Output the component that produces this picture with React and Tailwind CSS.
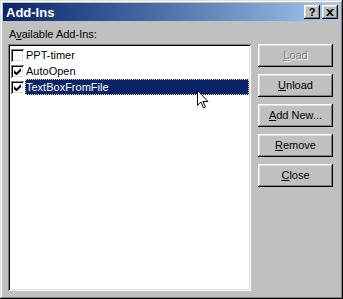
import React from 'react';

const raised =
  'shadow-[inset_-1px_-1px_#000,inset_1px_1px_#fff,inset_-2px_-2px_#808080,inset_2px_2px_#dfdfdf]';
const sunken =
  'shadow-[inset_1px_1px_#808080,inset_-1px_-1px_#fff,inset_2px_2px_#000,inset_-2px_-2px_#dfdfdf]';

const items = [
  { name: 'PPT-timer', checked: false },
  { name: 'AutoOpen', checked: true },
  { name: 'TextBoxFromFile', checked: true, selected: true },
];

const buttons = [
  { label: 'Load', key: 'L', rest: 'oad', disabled: true },
  { label: 'Unload', key: 'U', rest: 'nload' },
  { label: 'Add New...', key: 'A', rest: 'dd New...' },
  { label: 'Remove', key: 'R', rest: 'emove' },
  { label: 'Close', key: 'C', rest: 'lose' },
];

const CheckBox = ({ checked }) => (
  <div className={`w-[13px] h-[13px] bg-white flex items-center justify-center shrink-0 ${sunken}`}>
    {checked && (
      <svg width="7" height="7" viewBox="0 0 7 7">
        <path d="M0 2v3l2 2h1l4-4V0L2.5 4.5z" fill="#000" />
      </svg>
    )}
  </div>
);

export default function App() {
  return (
    <div
      className={`relative w-[343px] h-[299px] bg-[#c0c0c0] p-[3px] flex flex-col text-[11px] text-black shadow-[inset_-1px_-1px_#000,inset_1px_1px_#dfdfdf,inset_-2px_-2px_#808080,inset_2px_2px_#fff]`}
      style={{ fontFamily: '"Liberation Sans", Arial, sans-serif' }}
    >
      {/* title bar */}
      <div className="h-[18px] flex items-center justify-between pl-[3px] pr-[2px] bg-gradient-to-r from-[#0a246a] to-[#a6caf0]">
        <span className="text-white font-bold text-[13px] leading-none">Add-Ins</span>
        <div className="flex gap-[2px]">
          <div className={`w-[16px] h-[14px] bg-[#c0c0c0] flex items-center justify-center font-bold text-[11px] leading-none ${raised}`}>
            ?
          </div>
          <div className={`w-[16px] h-[14px] bg-[#c0c0c0] flex items-center justify-center ${raised}`}>
            <svg width="8" height="7" viewBox="0 0 8 7">
              <path d="M0 0h2l2 2 2-2h2L5 3.5 8 7H6L4 5 2 7H0l3-3.5z" fill="#000" />
            </svg>
          </div>
        </div>
      </div>

      <div className="flex flex-1 pl-[5px]">
        {/* left column */}
        <div className="flex flex-col">
          <div className="pt-[7px] pl-[1px] h-[23px] leading-[13px]">
            A<span className="underline">v</span>ailable Add-Ins:
          </div>
          <div className={`w-[243px] h-[247px] bg-white p-[2px] pt-[3px] ${sunken}`}>
            {items.map((it) => (
              <div key={it.name} className="h-[16px] flex items-center pl-[1px]">
                <CheckBox checked={it.checked} />
                <div
                  className={`ml-[1px] h-[16px] flex-1 flex items-center pl-[1px] ${
                    it.selected ? 'bg-[#0a246a] text-white outline-1 outline-dotted outline-[#e8d88a] -outline-offset-1' : ''
                  }`}
                >
                  {it.name}
                </div>
              </div>
            ))}
          </div>
        </div>

        {/* right column */}
        <div className="flex flex-col gap-[7px] pt-[23px] ml-[7px]">
          {buttons.map((b) => (
            <div
              key={b.label}
              className={`w-[75px] h-[23px] bg-[#c0c0c0] flex items-center justify-center ${raised} ${
                b.disabled ? 'text-[#808080] [text-shadow:1px_1px_#fff]' : ''
              }`}
            >
              <span className="underline">{b.key}</span>
              {b.rest}
            </div>
          ))}
        </div>
      </div>

      {/* mouse pointer */}
      <svg className="absolute left-[197px] top-[90px]" width="12" height="20" viewBox="0 0 12 20">
        <path d="M0.5 0.5v15l3.5-3.5 2.5 6 2-1-2.5-5.5h5z" fill="#fff" stroke="#000" strokeWidth="1" />
      </svg>
    </div>
  );
}
